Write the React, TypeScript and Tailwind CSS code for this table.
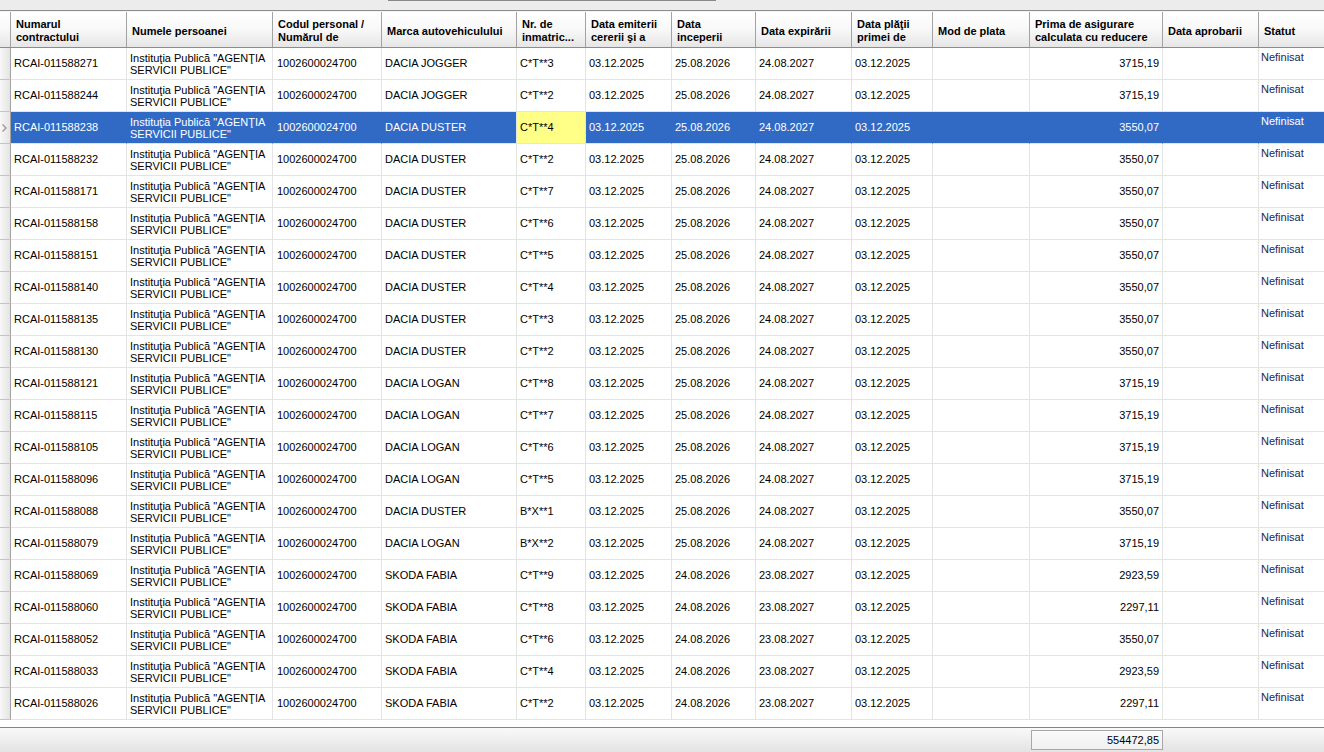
import React from "react";

type Row = {
  nr: string;
  marca: string;
  inm: string;
  inc: string;
  exp: string;
  prima: string;
};

const rows: Row[] = [
  { nr: "RCAI-011588271", marca: "DACIA JOGGER", inm: "C*T**3", inc: "25.08.2026", exp: "24.08.2027", prima: "3715,19" },
  { nr: "RCAI-011588244", marca: "DACIA JOGGER", inm: "C*T**2", inc: "25.08.2026", exp: "24.08.2027", prima: "3715,19" },
  { nr: "RCAI-011588238", marca: "DACIA DUSTER", inm: "C*T**4", inc: "25.08.2026", exp: "24.08.2027", prima: "3550,07" },
  { nr: "RCAI-011588232", marca: "DACIA DUSTER", inm: "C*T**2", inc: "25.08.2026", exp: "24.08.2027", prima: "3550,07" },
  { nr: "RCAI-011588171", marca: "DACIA DUSTER", inm: "C*T**7", inc: "25.08.2026", exp: "24.08.2027", prima: "3550,07" },
  { nr: "RCAI-011588158", marca: "DACIA DUSTER", inm: "C*T**6", inc: "25.08.2026", exp: "24.08.2027", prima: "3550,07" },
  { nr: "RCAI-011588151", marca: "DACIA DUSTER", inm: "C*T**5", inc: "25.08.2026", exp: "24.08.2027", prima: "3550,07" },
  { nr: "RCAI-011588140", marca: "DACIA DUSTER", inm: "C*T**4", inc: "25.08.2026", exp: "24.08.2027", prima: "3550,07" },
  { nr: "RCAI-011588135", marca: "DACIA DUSTER", inm: "C*T**3", inc: "25.08.2026", exp: "24.08.2027", prima: "3550,07" },
  { nr: "RCAI-011588130", marca: "DACIA DUSTER", inm: "C*T**2", inc: "25.08.2026", exp: "24.08.2027", prima: "3550,07" },
  { nr: "RCAI-011588121", marca: "DACIA LOGAN", inm: "C*T**8", inc: "25.08.2026", exp: "24.08.2027", prima: "3715,19" },
  { nr: "RCAI-011588115", marca: "DACIA LOGAN", inm: "C*T**7", inc: "25.08.2026", exp: "24.08.2027", prima: "3715,19" },
  { nr: "RCAI-011588105", marca: "DACIA LOGAN", inm: "C*T**6", inc: "25.08.2026", exp: "24.08.2027", prima: "3715,19" },
  { nr: "RCAI-011588096", marca: "DACIA LOGAN", inm: "C*T**5", inc: "25.08.2026", exp: "24.08.2027", prima: "3715,19" },
  { nr: "RCAI-011588088", marca: "DACIA DUSTER", inm: "B*X**1", inc: "25.08.2026", exp: "24.08.2027", prima: "3550,07" },
  { nr: "RCAI-011588079", marca: "DACIA LOGAN", inm: "B*X**2", inc: "25.08.2026", exp: "24.08.2027", prima: "3715,19" },
  { nr: "RCAI-011588069", marca: "SKODA FABIA", inm: "C*T**9", inc: "24.08.2026", exp: "23.08.2027", prima: "2923,59" },
  { nr: "RCAI-011588060", marca: "SKODA FABIA", inm: "C*T**8", inc: "24.08.2026", exp: "23.08.2027", prima: "2297,11" },
  { nr: "RCAI-011588052", marca: "SKODA FABIA", inm: "C*T**6", inc: "24.08.2026", exp: "23.08.2027", prima: "3550,07" },
  { nr: "RCAI-011588033", marca: "SKODA FABIA", inm: "C*T**4", inc: "24.08.2026", exp: "23.08.2027", prima: "2923,59" },
  { nr: "RCAI-011588026", marca: "SKODA FABIA", inm: "C*T**2", inc: "24.08.2026", exp: "23.08.2027", prima: "2297,11" },
];

const W = [
  "w-[116px]",
  "w-[146px]",
  "w-[109px]",
  "w-[135px]",
  "w-[69px]",
  "w-[86px]",
  "w-[84px]",
  "w-[96px]",
  "w-[81px]",
  "w-[97px]",
  "w-[133px]",
  "w-[96px]",
];

const headers: string[][] = [
  ["Numarul", "contractului"],
  ["Numele persoanei"],
  ["Codul personal /", "Numărul de"],
  ["Marca autovehiculului"],
  ["Nr. de", "inmatric..."],
  ["Data emiterii", "cererii şi a"],
  ["Data", "inceperii"],
  ["Data expirării"],
  ["Data plăţii", "primei de"],
  ["Mod de plata"],
  ["Prima de asigurare", "calculata cu reducere"],
  ["Data aprobarii"],
];

function HeaderCell({ w, lines }: { w: string; lines: string[] }) {
  return (
    <div
      className={`${w} shrink-0 h-full border-r border-[#a3a3a3] flex flex-col justify-center pt-[3px] pl-[5px] overflow-hidden whitespace-nowrap font-bold leading-[13px] text-black`}
    >
      {lines.map((l, i) => (
        <div key={i}>{l}</div>
      ))}
    </div>
  );
}

export default function App() {
  return (
    <div className="w-[1324px] h-[752px] overflow-hidden bg-white flex flex-col font-['Liberation_Sans',Arial,sans-serif] text-[11px] text-black">
      {/* top strip */}
      <div className="h-[10px] shrink-0 bg-[#ececec] pl-[388px]">
        <div className="w-[328px] h-px bg-[#8a8a8a]" />
      </div>
      <div className="h-px shrink-0 bg-[#8c8c8c]" />

      {/* header */}
      <div className="h-[37px] shrink-0 flex border-b border-[#8c8c8c] bg-linear-to-b from-[#ffffff] via-[#f8f8f8] to-[#e6e6e6] border-t border-t-[#f4f4f4]">
        <div className="w-[11px] shrink-0 h-full border-r border-[#a3a3a3]" />
        {headers.map((h, i) => (
          <HeaderCell key={i} w={W[i]} lines={h} />
        ))}
        <div className="flex-1 h-full flex flex-col justify-center pt-[3px] pl-[5px] font-bold leading-[13px] whitespace-nowrap">
          Statut
        </div>
      </div>

      {/* body */}
      <div className="flex flex-col shrink-0">
        {rows.map((r, idx) => {
          const sel = idx === 2;
          const txt = sel ? "text-white" : "text-black";
          const bg = sel ? "bg-[#316ac5]" : "bg-white";
          const br = sel ? "border-r-[#316ac5]" : "border-r-[#e4e4e4]";
          const cell = `shrink-0 h-full border-r border-b border-b-[#e4e4e4] ${br} flex items-center overflow-hidden whitespace-nowrap`;
          return (
            <div key={idx} className={`h-[32px] flex ${txt}`}>
              <div className="w-[11px] shrink-0 h-full border-r border-b border-r-[#a3a3a3] border-b-[#c4c4c4] bg-linear-to-r from-[#f8f8f8] to-[#e4e4e4] flex items-center">
                {sel && (
                  <svg width="7" height="10" viewBox="0 0 7 10" className="ml-[1px]">
                    <polyline points="1.5,1.5 5,5 1.5,8.5" fill="none" stroke="#9a9a9a" strokeWidth="1.4" />
                  </svg>
                )}
              </div>
              <div className={`${W[0]} ${cell} ${bg} pl-[3px]`}>{r.nr}</div>
              <div className={`${W[1]} ${cell} ${bg} pl-[3px] leading-[12px]`}>
                <div className="flex flex-col">
                  <span>Instituţia Publică "AGENŢIA</span>
                  <span>SERVICII PUBLICE"</span>
                </div>
              </div>
              <div className={`${W[2]} ${cell} ${bg} pl-[4px]`}>1002600024700</div>
              <div className={`${W[3]} shrink-0 h-full border-r border-b border-[#e4e4e4] flex items-center overflow-hidden whitespace-nowrap ${bg} pl-[3px]`}>
                {r.marca}
              </div>
              <div className={`${W[4]} shrink-0 h-full border-r border-b border-[#e4e4e4] flex items-center overflow-hidden whitespace-nowrap pl-[3px] ${sel ? "bg-[#ffff88] text-black" : "bg-white"}`}>
                {r.inm}
              </div>
              <div className={`${W[5]} ${cell} ${bg} pl-[3px]`}>03.12.2025</div>
              <div className={`${W[6]} ${cell} ${bg} pl-[3px]`}>{r.inc}</div>
              <div className={`${W[7]} ${cell} ${bg} pl-[3px]`}>{r.exp}</div>
              <div className={`${W[8]} ${cell} ${bg} pl-[3px]`}>03.12.2025</div>
              <div className={`${W[9]} ${cell} ${bg}`} />
              <div className={`${W[10]} ${cell} ${bg} justify-end pr-[3px]`}>{r.prima}</div>
              <div className={`${W[11]} ${cell} ${bg}`} />
              <div className={`flex-1 h-full border-b border-[#e4e4e4] ${bg} pl-[2px] pt-[3px] leading-[12px] whitespace-nowrap ${sel ? "text-white" : "text-[#1c2557]"}`}>
                Nefinisat
              </div>
            </div>
          );
        })}
      </div>

      <div className="flex-1 bg-white" />

      {/* footer */}
      <div className="h-[25px] shrink-0 border-t border-[#858585] bg-linear-to-b from-[#f9f9f9] to-[#e3e3e3] flex">
        <div className="w-[1031px] shrink-0" />
        <div className="w-[132px] h-[20px] mt-[2px] border border-[#a8a8a8] bg-linear-to-b from-[#fafafa] to-[#f0f0f0] flex items-center justify-end pr-[3px] text-black">
          554472,85
        </div>
      </div>
    </div>
  );
}
